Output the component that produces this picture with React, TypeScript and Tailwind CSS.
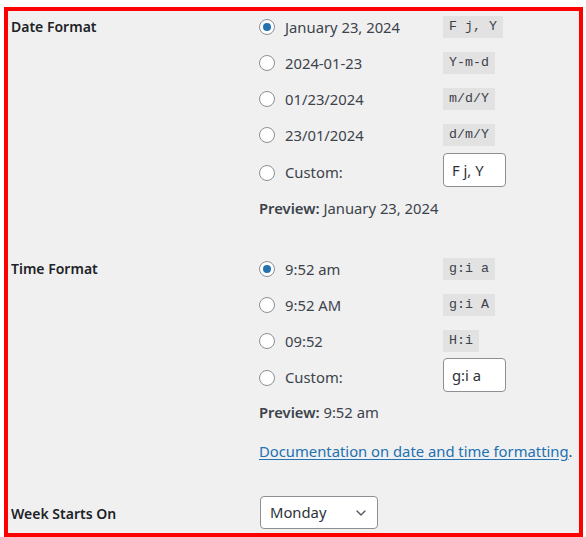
import { ChevronDown } from "lucide-react";

const font = { fontFamily: '"Noto Sans", "Open Sans", sans-serif' };

function Radio({ checked }: { checked?: boolean }) {
  return (
    <span className="flex h-4 w-4 shrink-0 items-center justify-center rounded-full border border-[#8c8f94] bg-white">
      {checked && <span className="h-2 w-2 rounded-full bg-[#2271b1]" />}
    </span>
  );
}

function Option({ label, code, checked }: { label: string; code: string; checked?: boolean }) {
  return (
    <div className="flex h-[22px] items-center">
      <Radio checked={checked} />
      <span className="ml-[10px] w-[158px] text-[14.8px] text-[#3c434a]">{label}</span>
      <code className="bg-[#e2e2e3] px-[6px] font-['Liberation_Mono','DejaVu_Sans_Mono',monospace] text-[13.3px] leading-[22px] text-[#3c434a]">
        {code}
      </code>
    </div>
  );
}

function CustomRow({ value }: { value: string }) {
  return (
    <div className="flex h-[34px] items-center">
      <span className="mt-[5px] flex items-center">
        <Radio />
        <span className="ml-[10px] w-[158px] text-[14.8px] text-[#3c434a]">Custom:</span>
      </span>
      <span className="flex h-[34px] w-[63px] items-center rounded-[4px] border border-[#8c8f94] bg-white px-2 text-[14.8px] text-[#2c3338]">
        {value}
      </span>
    </div>
  );
}

function Label({ children, className = "" }: { children: string; className?: string }) {
  return (
    <div className={`w-[251px] shrink-0 pl-[3px] text-[14px] font-semibold text-[#1d2327] ${className}`}>
      {children}
    </div>
  );
}

export default function App() {
  return (
    <div className="h-[537px] w-[586px] bg-white pl-[4px] pt-[7px]" style={font}>
      <div className="h-[530px] w-[579px] border-4 border-[#ff0000] bg-[#f0f0f1]">
        <div className="flex pt-[5px]">
          <Label className="leading-[22px]">Date Format</Label>
          <div className="flex flex-col">
            <div className="flex flex-col gap-[14px]">
              <Option label="January 23, 2024" code="F j, Y" checked />
              <Option label="2024-01-23" code="Y-m-d" />
              <Option label="01/23/2024" code="m/d/Y" />
              <Option label="23/01/2024" code="d/m/Y" />
            </div>
            <div className="mt-[7px]">
              <CustomRow value="F j, Y" />
            </div>
            <p className="mt-[11px] text-[14.8px] leading-[20px] text-[#3c434a]">
              <span className="font-semibold">Preview:</span> January 23, 2024
            </p>
          </div>
        </div>

        <div className="mt-[40px] flex">
          <Label className="leading-[22px]">Time Format</Label>
          <div className="flex flex-col">
            <div className="flex flex-col gap-[14px]">
              <Option label="9:52 am" code="g:i a" checked />
              <Option label="9:52 AM" code="g:i A" />
              <Option label="09:52" code="H:i" />
            </div>
            <div className="mt-[6px]">
              <CustomRow value="g:i a" />
            </div>
            <p className="mt-[10px] text-[14.8px] leading-[20px] text-[#3c434a]">
              <span className="font-semibold">Preview:</span> 9:52 am
            </p>
            <p className="mt-[19px] text-[14.8px] leading-[20px] text-[#3c434a]">
              <a className="text-[#2271b1] underline underline-offset-2">
                Documentation on date and time formatting
              </a>
              .
            </p>
          </div>
        </div>

        <div className="mt-[35px] flex items-center">
          <Label className="pt-[1px]">Week Starts On</Label>
          <div className="ml-[1px] flex h-[33px] w-[118px] items-center justify-between rounded-[4px] border border-[#8c8f94] bg-white pl-[9px] pr-[8px] text-[14.8px] text-[#2c3338]">
            <span>Monday</span>
            <ChevronDown size={16} strokeWidth={2} className="text-[#50575e]" />
          </div>
        </div>
      </div>
    </div>
  );
}
